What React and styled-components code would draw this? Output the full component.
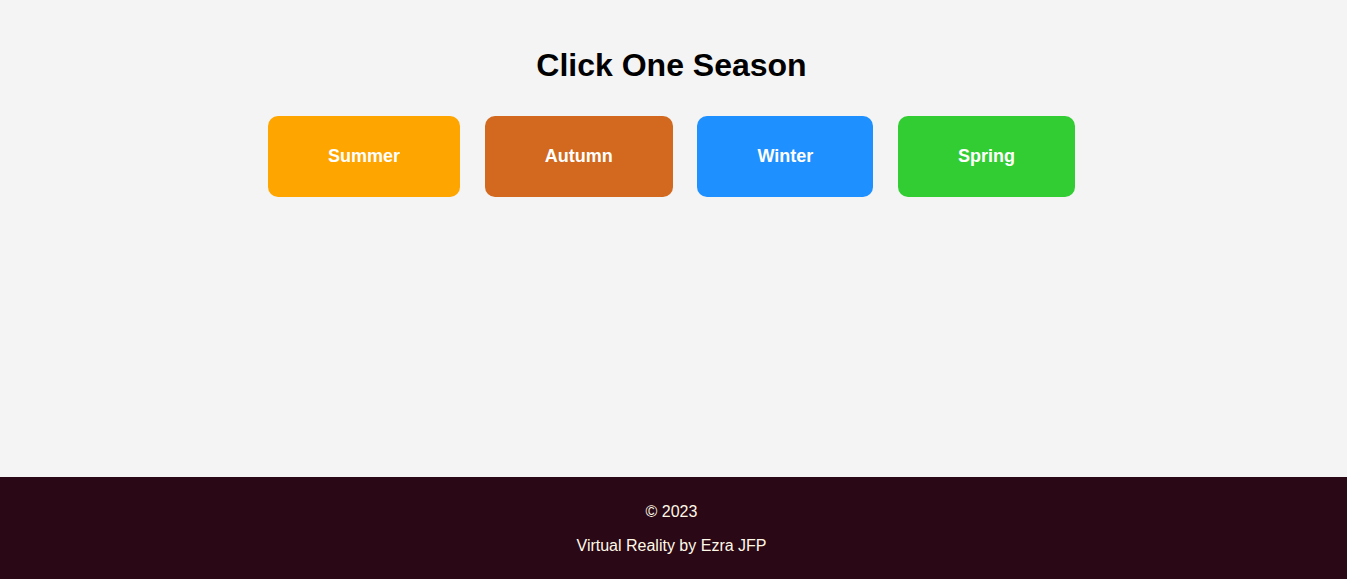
import React, { useState } from 'react'
import styled, { createGlobalStyle } from 'styled-components'

const seasons = [
  { name: 'Summer', color: '#ffa500' },
  { name: 'Autumn', color: '#d2691e' },
  { name: 'Winter', color: '#1e90ff' },
  { name: 'Spring', color: '#32cd32' },
]

function App() {
  const [picked, setPicked] = useState(null)

  return (
    <>
      <GlobalStyle />
      <Page>
        <Main>
          <Title>Click One Season</Title>
          <ButtonRow>
            {seasons.map((s) => (
              <SeasonBtn key={s.name} bg={s.color} onClick={() => setPicked(s.name)}>
                {s.name}
              </SeasonBtn>
            ))}
          </ButtonRow>
          {picked && <Hidden>{picked}</Hidden>}
        </Main>
        <Footer>
          <FooterText>© 2023</FooterText>
          <FooterText>Virtual Reality by Ezra JFP</FooterText>
        </Footer>
      </Page>
    </>
  )
}

export default App

const GlobalStyle = createGlobalStyle`
  body {
    margin: 0;
    background: #f4f4f4;
    font-family: "Liberation Sans", Arial, sans-serif;
  }
`

const Page = styled.div`
  min-height: 100vh;
  display: flex;
  flex-direction: column;
`

const Main = styled.main`
  flex: 1;
  display: flex;
  flex-direction: column;
  align-items: center;
  padding: 47px 4px 0 0;
`

const Title = styled.h1`
  margin: 0;
  font-size: 32px;
  line-height: 37px;
  font-weight: bold;
  color: #000;
`

const ButtonRow = styled.div`
  display: flex;
  gap: 24.66px;
  margin-top: 32px;
`

const SeasonBtn = styled.button`
  cursor: pointer;
  border: none;
  border-radius: 10px;
  padding: 30px 60px;
  font-family: "Liberation Sans", Arial, sans-serif;
  font-size: 18px;
  line-height: 21px;
  font-weight: bold;
  color: #fff;
  background-color: ${(p) => p.bg};
`

const Hidden = styled.span`
  display: none;
`

const Footer = styled.footer`
  background: #2a0815;
  padding: 26px 4px 24px 0;
  display: flex;
  flex-direction: column;
  align-items: center;
  gap: 16px;
`

const FooterText = styled.p`
  margin: 0;
  font-size: 16px;
  line-height: 18px;
  color: #fff8e7;
`
